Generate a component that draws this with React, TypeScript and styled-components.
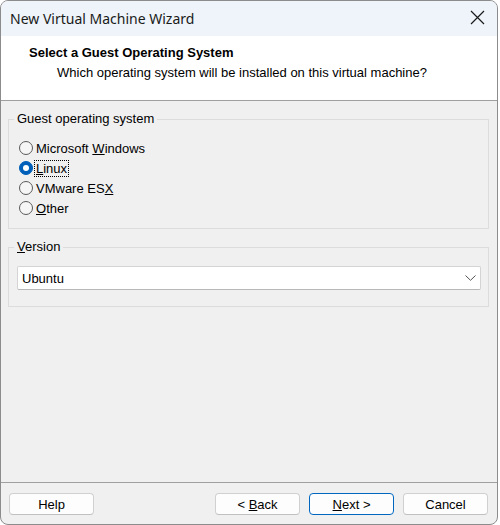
import React, { FC, useState } from "react";
import styled, { createGlobalStyle } from "styled-components";

const GlobalStyle = createGlobalStyle`
  html, body {
    margin: 0;
    padding: 0;
    background: #ffffff;
  }
  * {
    box-sizing: border-box;
  }
`;

const Window = styled.div`
  width: 498px;
  height: 525px;
  display: flex;
  flex-direction: column;
  border: 1px solid #8c8c8c;
  border-radius: 8px;
  overflow: hidden;
  background: #f0f0f0;
  font-family: "Liberation Sans", Arial, sans-serif;
  font-size: 13px;
  color: #000;
`;

const TitleBar = styled.div`
  height: 35px;
  flex: none;
  display: flex;
  align-items: center;
  justify-content: space-between;
  padding-left: 9px;
  padding-right: 11px;
  background: #eef4f9;
`;

const TitleText = styled.span`
  font-family: "Noto Sans", "Open Sans", sans-serif;
  font-size: 14px;
  color: #1a1a1a;
  margin-top: -1px;
`;

const CloseButton = styled.button`
  width: 18px;
  height: 18px;
  padding: 0;
  margin-top: -2px;
  border: none;
  background: none;
  display: flex;
  align-items: center;
  justify-content: center;
`;

const Header = styled.div`
  height: 65px;
  flex: none;
  background: #ffffff;
  border-bottom: 1px solid #a0a0a0;
  padding: 9px 0 0 28px;
`;

const HeaderTitle = styled.div`
  font-weight: bold;
  line-height: 16px;
`;

const HeaderSub = styled.div`
  margin-top: 4px;
  padding-left: 28px;
  line-height: 16px;
`;

const Body = styled.div`
  flex: 1;
  display: flex;
  flex-direction: column;
  gap: 10px;
  padding: 10px 8px 0 7px;
`;

const Group = styled.fieldset<{ $pad: string }>`
  margin: 0;
  border: 1px solid #dcdcdc;
  padding: ${(p) => p.$pad};
`;

const Legend = styled.legend`
  margin-left: -3px;
  padding: 0 3px;
  line-height: 16px;
`;

const RadioList = styled.div`
  display: flex;
  flex-direction: column;
  padding-left: 2px;
`;

const RadioRow = styled.label`
  height: 20px;
  display: flex;
  align-items: center;
  gap: 1px;
  cursor: default;
`;

const RadioCircle = styled.span<{ $on: boolean }>`
  width: 14px;
  height: 14px;
  border-radius: 50%;
  flex: none;
  display: flex;
  align-items: center;
  justify-content: center;
  border: 1px solid ${(p) => (p.$on ? "#005fb8" : "#5a5a5a")};
  background: ${(p) => (p.$on ? "#005fb8" : "#f6f6f6")};

  &::after {
    content: "";
    display: ${(p) => (p.$on ? "block" : "none")};
    width: 6px;
    height: 6px;
    border-radius: 50%;
    background: #ffffff;
  }
`;

const RadioText = styled.span<{ $focus: boolean }>`
  padding: 0 1px;
  line-height: 15px;
  border: 1px dotted ${(p) => (p.$focus ? "#000" : "transparent")};
`;

const Select = styled.div`
  height: 24px;
  display: flex;
  align-items: center;
  justify-content: space-between;
  padding: 0 4px 0 4px;
  background: #ffffff;
  border: 1px solid #d4d4d4;
  border-bottom-color: #b8b8b8;
  border-radius: 2px;
`;

const Footer = styled.div`
  height: 42px;
  flex: none;
  display: flex;
  align-items: flex-start;
  padding: 10px 9px 0 8px;
  border-top: 1px solid #a0a0a0;
`;

const Spacer = styled.div`
  flex: 1;
`;

const Button = styled.button<{ $primary?: boolean }>`
  width: 85px;
  height: 22px;
  margin-left: ${(p) => (p.$primary ? "9px" : "0")};
  margin-right: ${(p) => (p.$primary ? "9px" : "0")};
  padding: 0;
  font-family: inherit;
  font-size: 13px;
  color: #000;
  background: #fdfdfd;
  border: 1px solid ${(p) => (p.$primary ? "#0067c0" : "#d0d0d0")};
  border-bottom-color: ${(p) => (p.$primary ? "#0067c0" : "#c0c0c0")};
  border-radius: 4px;
`;

const CloseIcon = () => (
  <svg width="15" height="15" viewBox="0 0 15 15">
    <path d="M1 1 L14 14 M14 1 L1 14" stroke="#1a1a1a" strokeWidth="1.2" fill="none" />
  </svg>
);

const Chevron = () => (
  <svg width="11" height="6" viewBox="0 0 11 6">
    <polyline points="0.5,0.5 5.5,5.3 10.5,0.5" stroke="#555" strokeWidth="1" fill="none" />
  </svg>
);

const options: { key: string; label: React.ReactNode }[] = [
  { key: "windows", label: <>Microsoft <u>W</u>indows</> },
  { key: "linux", label: <><u>L</u>inux</> },
  { key: "esx", label: <>VMware ES<u>X</u></> },
  { key: "other", label: <><u>O</u>ther</> },
];

const App: FC = () => {
  const [os, setOs] = useState("linux");

  return (
    <>
      <GlobalStyle />
      <Window>
        <TitleBar>
          <TitleText>New Virtual Machine Wizard</TitleText>
          <CloseButton>
            <CloseIcon />
          </CloseButton>
        </TitleBar>

        <Header>
          <HeaderTitle>Select a Guest Operating System</HeaderTitle>
          <HeaderSub>Which operating system will be installed on this virtual machine?</HeaderSub>
        </Header>

        <Body>
          <Group $pad="11px 10px 10px 8px">
            <Legend>Guest operating system</Legend>
            <RadioList>
              {options.map(({ key, label }) => (
                <RadioRow key={key} onClick={() => setOs(key)}>
                  <RadioCircle $on={os === key} />
                  <RadioText $focus={os === key}>{label}</RadioText>
                </RadioRow>
              ))}
            </RadioList>
          </Group>

          <Group $pad="11px 7px 16px 8px">
            <Legend>
              <u>V</u>ersion
            </Legend>
            <Select>
              <span>Ubuntu</span>
              <Chevron />
            </Select>
          </Group>
        </Body>

        <Footer>
          <Button>Help</Button>
          <Spacer />
          <Button>
            &lt; <u>B</u>ack
          </Button>
          <Button $primary>
            <u>N</u>ext &gt;
          </Button>
          <Button>Cancel</Button>
        </Footer>
      </Window>
    </>
  );
};

export default App;
